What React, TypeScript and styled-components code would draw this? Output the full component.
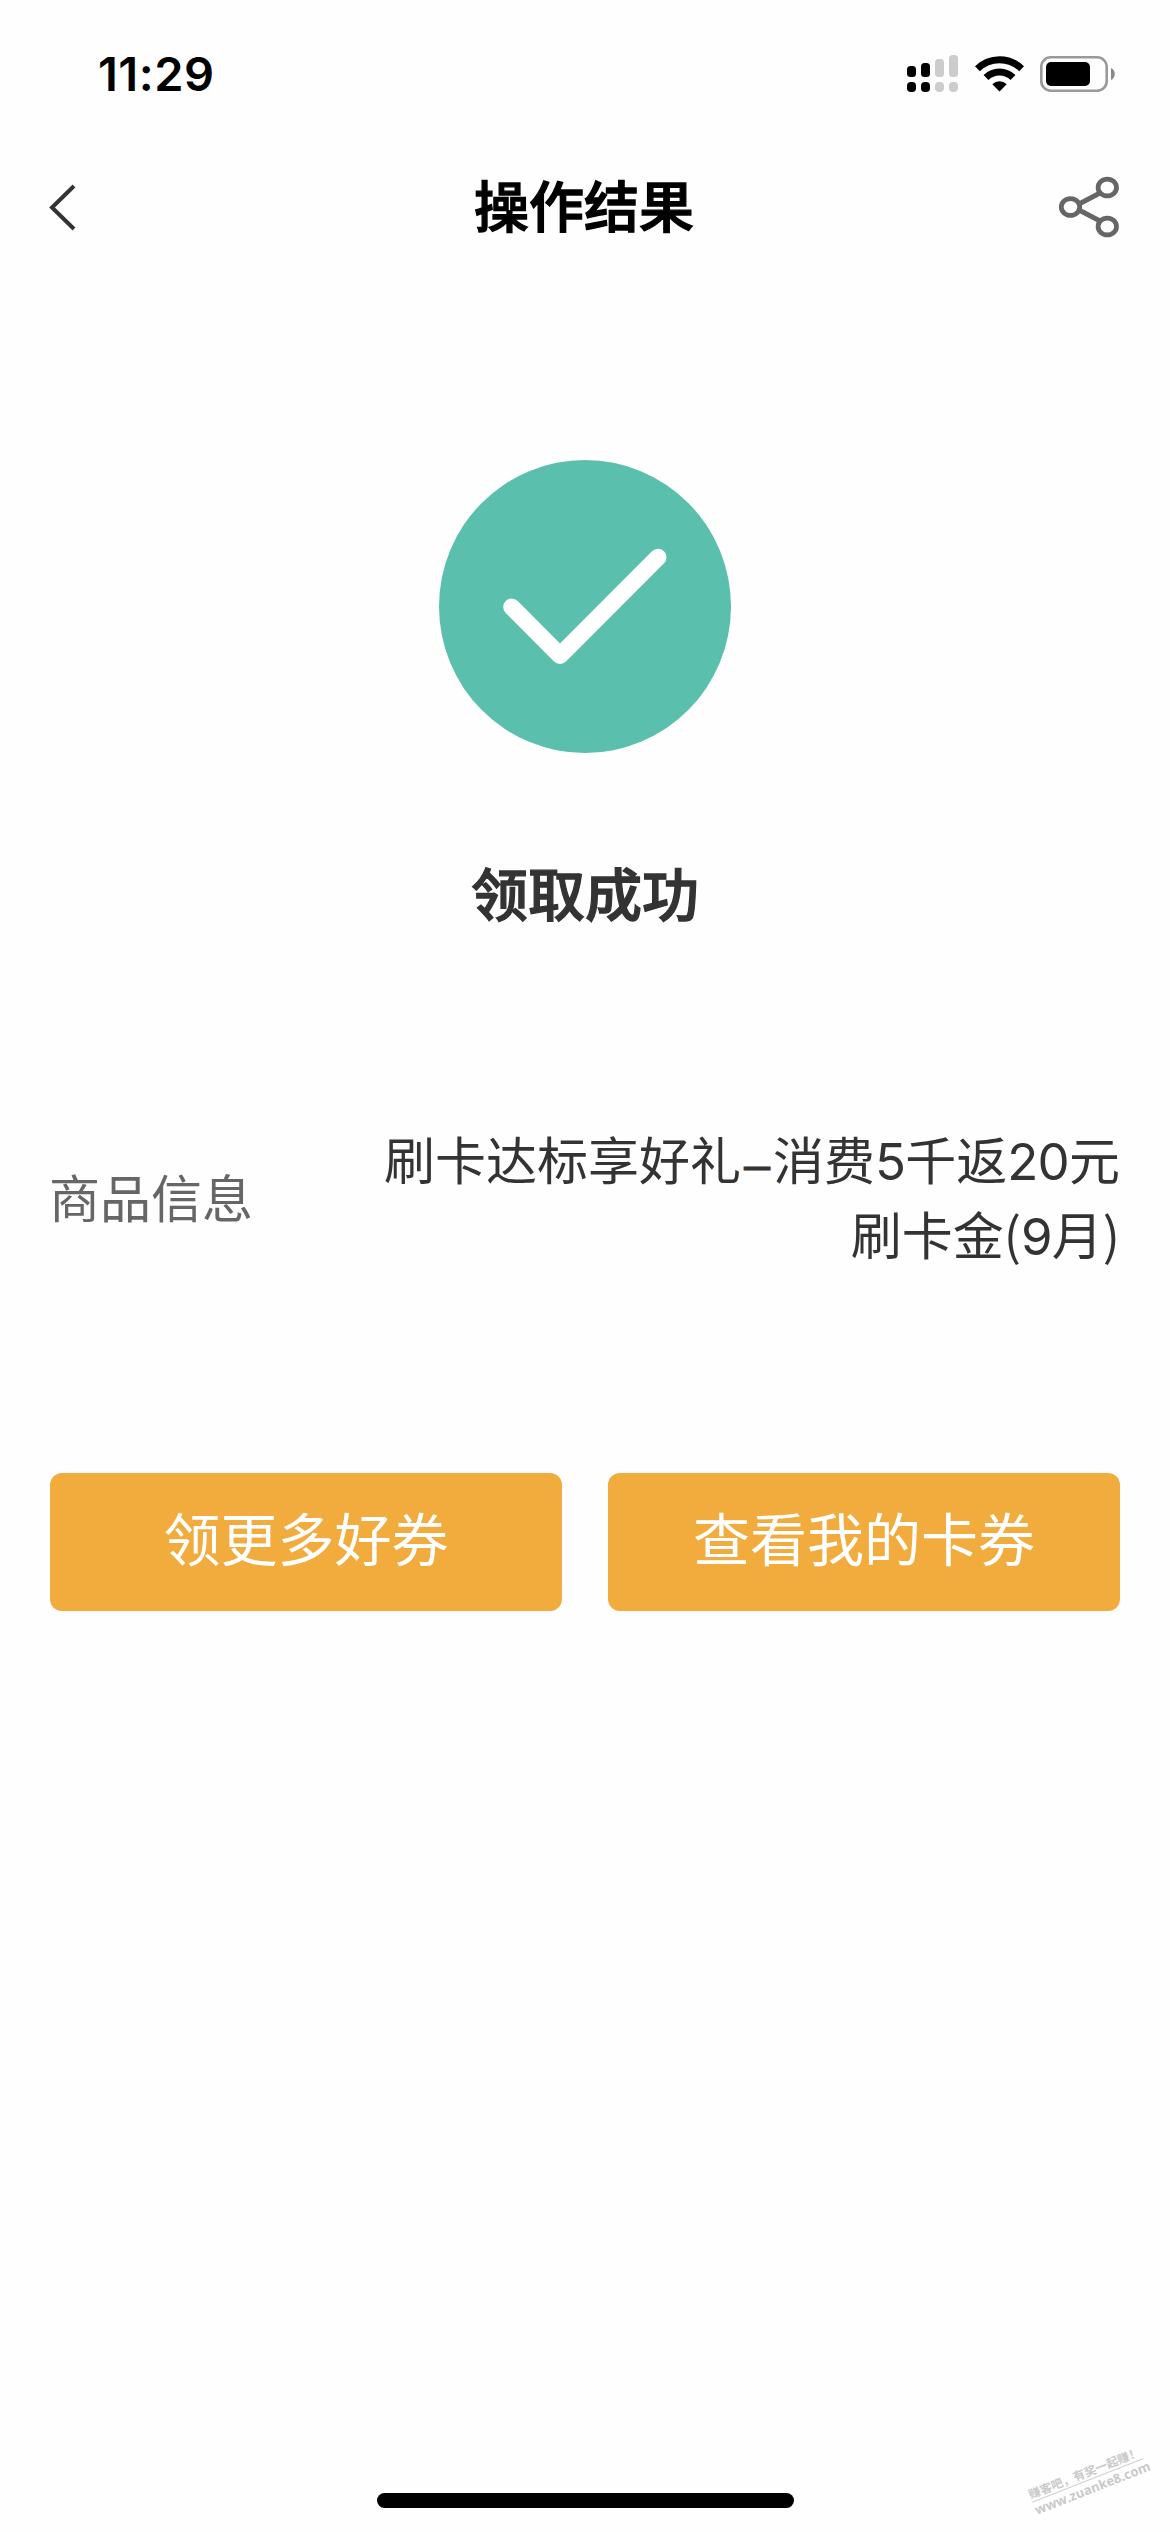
import React from "react";
import styled, { createGlobalStyle } from "styled-components";

const GlobalStyle = createGlobalStyle`
  *, *::before, *::after { box-sizing: border-box; }
  body {
    margin: 0;
    background: #fefefe;
    font-family: "Noto Sans CJK SC", sans-serif;
  }
`;

const Screen = styled.div`
  position: relative;
  width: 1170px;
  height: 2532px;
  overflow: hidden;
  display: flex;
  flex-direction: column;
  background: #fefefe;
`;

const StatusBar = styled.header`
  height: 132px;
  padding: 16px 54px 0 98px;
  display: flex;
  align-items: center;
  justify-content: space-between;
`;

const Clock = styled.time`
  font: 600 47px/56px Inter, sans-serif;
  letter-spacing: 0.5px;
  color: #000;
`;

const StatusIcons = styled.div`
  display: flex;
  align-items: center;
  gap: 16px;
`;

const NavBar = styled.nav`
  height: 150px;
  padding: 0 50px 0 48px;
  display: grid;
  grid-template-columns: 62px 1fr 62px;
  align-items: center;
`;

const Title = styled.h1`
  margin: 0;
  padding-bottom: 8px;
  text-align: center;
  font-size: 55px;
  line-height: 80px;
  font-weight: 500;
  color: #000;
  -webkit-text-stroke: 1.3px #000;
`;

const IconButton = styled.button<{ $end?: boolean }>`
  padding: 0;
  border: 0;
  background: none;
  display: flex;
  justify-content: ${(p) => (p.$end ? "flex-end" : "flex-start")};
`;

const Result = styled.section`
  padding-top: 178px;
  display: flex;
  flex-direction: column;
  align-items: center;
`;

const ResultText = styled.h2`
  margin: 98px 0 0;
  font-size: 57px;
  line-height: 80px;
  font-weight: 500;
  color: #333;
  -webkit-text-stroke: 1.3px #333;
`;

const InfoRow = styled.dl`
  margin: 190px 50px 0;
  height: 150px;
  display: flex;
  align-items: center;
  justify-content: space-between;
  font-size: 51px;
  line-height: 75px;
`;

const Label = styled.dt`
  margin-left: -1px;
  color: #666;
`;

const Value = styled.dd`
  margin: 0;
  width: 760px;
  text-align: right;
  color: #333;
`;

const Latin = styled.span`
  font-family: Inter, sans-serif;
  font-weight: 400;
  line-height: 0;
  letter-spacing: -0.8px;
`;

const Dash = styled.span`
  display: inline-block;
  width: 32px;
  text-align: center;
  font-family: "Liberation Sans", sans-serif;
  font-size: 47px;
  line-height: 0;
  -webkit-text-stroke: 0.8px #333;
`;

const Actions = styled.div`
  margin: 202px 50px 0;
  display: grid;
  grid-template-columns: 1fr 1fr;
  gap: 46px;
`;

const ActionButton = styled.button`
  height: 138px;
  padding: 0 0 13px;
  border: 0;
  border-radius: 12px;
  background: #f1ac3d;
  color: #fff;
  font-family: inherit;
  font-size: 57px;
  font-weight: 400;
  line-height: 80px;
`;

const HomeIndicator = styled.div`
  width: 417px;
  height: 15px;
  margin: auto auto 24px;
  border-radius: 8px;
  background: #000;
`;

const Watermark = styled.div`
  position: absolute;
  left: 1028px;
  top: 2463px;
  width: 119px;
  transform: rotate(-21.5deg);
  color: #c9c9c9;
  white-space: nowrap;
`;

const WatermarkSlogan = styled.div`
  border-bottom: 1px solid #cfcfcf;
  font-size: 11.9px;
  line-height: 17px;
  font-weight: 700;
`;

const WatermarkUrl = styled.div`
  font: 700 13px/17px "Open Sans", sans-serif;
`;

const Signal = () => (
  <svg width="52" height="38" viewBox="0 0 52 38">
    <g fill="#000">
      <rect x="0" y="11" width="9" height="11" rx="3.5" />
      <rect x="14" y="8" width="9" height="14" rx="3.5" />
      <rect x="0" y="27" width="9" height="10" rx="3.8" />
      <rect x="14" y="27" width="9" height="10" rx="3.8" />
    </g>
    <g fill="#ccc">
      <rect x="28" y="4" width="9" height="18" rx="3.5" />
      <rect x="42" y="0" width="9" height="22" rx="3.5" />
      <rect x="28" y="27" width="9" height="10" rx="4" />
      <rect x="42" y="27" width="9" height="10" rx="4" />
    </g>
  </svg>
);

const Wifi = () => (
  <svg width="49" height="36" viewBox="0 0 49 36">
    <g fill="none" stroke="#000" strokeWidth="7">
      <path d="M2.4 12.7a31.5 31.5 0 0 1 44.2 0" />
      <path d="M11 21.4a19.3 19.3 0 0 1 27 0" />
    </g>
    <path d="M24.5 35.5 17.3 28.3a10.3 10.3 0 0 1 14.4 0Z" fill="#000" />
  </svg>
);

const Battery = () => (
  <svg width="76" height="36" viewBox="0 0 76 36">
    <rect x="1.3" y="1.3" width="65.4" height="33.4" rx="9.5" fill="none" stroke="#999" strokeWidth="2.6" />
    <rect x="6" y="6" width="44" height="24" rx="5" fill="#000" />
    <path d="M71 12c5 2 5 10 0 12Z" fill="#888" />
  </svg>
);

const BackIcon = () => (
  <svg width="30" height="50" viewBox="0 0 30 50">
    <path d="M26 4 4 25.5 26 47" fill="none" stroke="#333" strokeWidth="4" />
  </svg>
);

const ShareIcon = () => (
  <svg width="62" height="62" viewBox="0 0 62 62">
    <g fill="none" stroke="#666" strokeWidth="4.8">
      <ellipse cx="12.5" cy="31" rx="9.2" ry="8.4" />
      <ellipse cx="49.3" cy="11.5" rx="9.2" ry="8.4" />
      <ellipse cx="49.3" cy="50.5" rx="9.2" ry="8.4" />
      <path d="M21 28 42 17M21 34 42 45" />
    </g>
  </svg>
);

const SuccessIcon = () => (
  <svg width="292" height="293" viewBox="0 0 292 293">
    <ellipse cx="146" cy="146.5" rx="146" ry="146.5" fill="#5abfac" />
    <path
      d="M72.7 147 121 195.5 219 97.3"
      fill="none"
      stroke="#fff"
      strokeWidth="17"
      strokeLinecap="round"
      strokeLinejoin="round"
    />
  </svg>
);

export default function App() {
  return (
    <>
      <GlobalStyle />
      <Screen>
        <StatusBar>
          <Clock>11:29</Clock>
          <StatusIcons>
            <Signal />
            <Wifi />
            <Battery />
          </StatusIcons>
        </StatusBar>
        <NavBar>
          <IconButton aria-label="返回">
            <BackIcon />
          </IconButton>
          <Title>操作结果</Title>
          <IconButton $end aria-label="分享">
            <ShareIcon />
          </IconButton>
        </NavBar>
        <Result>
          <SuccessIcon />
          <ResultText>领取成功</ResultText>
        </Result>
        <InfoRow>
          <Label>商品信息</Label>
          <Value>
            刷卡达标享好礼<Dash>–</Dash>消费<Latin>5</Latin>千返<Latin>20</Latin>元
            <br />
            刷卡金(<Latin>9</Latin>月)
          </Value>
        </InfoRow>
        <Actions>
          <ActionButton>领更多好券</ActionButton>
          <ActionButton>查看我的卡券</ActionButton>
        </Actions>
        <HomeIndicator />
        <Watermark>
          <WatermarkSlogan>赚客吧，有奖一起赚！</WatermarkSlogan>
          <WatermarkUrl>www.zuanke8.com</WatermarkUrl>
        </Watermark>
      </Screen>
    </>
  );
}
